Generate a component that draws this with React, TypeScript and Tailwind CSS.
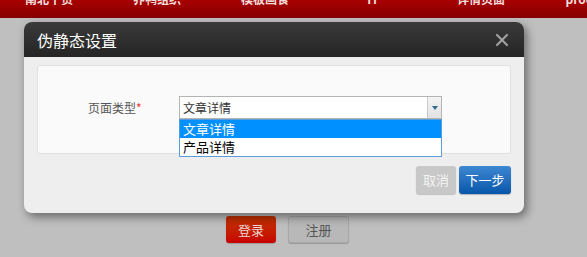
import { X } from "lucide-react";

const navItems = ["南北干货", "养鸭组织", "模板画食", "IT", "详情页面", "product"];

export default function App() {
  return (
    <div
      className="relative w-[587px] h-[257px] overflow-hidden bg-[#bfbfbf]"
      style={{ fontFamily: '"Noto Sans CJK SC", "Liberation Sans", sans-serif' }}
    >
      {/* top nav, mostly scrolled off */}
      <div className="h-[18px] overflow-hidden bg-gradient-to-b from-[#a80000] to-[#860000]">
        <div className="flex -mt-[9px] -ml-[5px]">
          {navItems.map((t) => (
            <span key={t} className="w-[108px] shrink-0 text-center text-[12px] font-bold leading-[16px] text-[#f2dcdc]">
              {t}
            </span>
          ))}
        </div>
      </div>

      {/* page buttons behind the overlay */}
      <div className="flex gap-[12px] mt-[198px] ml-[226px]">
        <button className="w-[50px] h-[27px] rounded-[3px] bg-gradient-to-b from-[#c03000] to-[#c80000] text-[13px] text-[#f0d8d8] shadow-[0_1px_1px_rgba(0,0,0,0.2)]">
          登录
        </button>
        <button className="w-[61px] h-[27px] rounded-[3px] border border-[#a8a8a8] bg-[#b8b8b8] text-[13px] text-[#555] shadow-[0_1px_1px_rgba(0,0,0,0.2)]">
          注册
        </button>
      </div>

      {/* dialog */}
      <div className="absolute left-[24px] top-[22px] w-[500px] h-[191px] rounded-[8px] bg-[#eeeeee] shadow-[3px_4px_10px_rgba(0,0,0,0.45)]">
        <div className="flex items-center justify-between h-[35px] pl-[13px] pr-[12px] rounded-t-[8px] bg-gradient-to-b from-[#3a3a3a] to-[#252525]">
          <span className="text-[16px] text-white leading-none">伪静态设置</span>
          <X size={20} strokeWidth={2.6} className="text-[#a0a0a0]" />
        </div>

        <div className="mx-[13px] mt-[8px] h-[89px] rounded-[3px] border border-[#e0e0e0] bg-[#fafafa]">
          <div className="flex items-center mt-[30px] ml-[50px]">
            <span className="w-[91px] text-[12px] text-[#555]">
              页面类型<span className="text-[#e33]">*</span>
            </span>
            <div className="relative">
              <div className="flex w-[263px] h-[23px] border border-[#b4b4b4] bg-white">
                <span className="flex-1 pl-[3px] text-[12px] leading-[21px] text-[#333]">文章详情</span>
                <div className="flex items-center justify-center w-[14px] border-l border-[#c8c8c8] bg-gradient-to-b from-[#f4f4f4] to-[#e2e2e2]">
                  <span className="w-0 h-0 border-l-[3px] border-r-[3px] border-t-[4px] border-l-transparent border-r-transparent border-t-[#2f6a98]" />
                </div>
              </div>
              <div className="absolute left-0 top-[23px] w-[263px] border border-[#5a9ddc] bg-white">
                <div className="h-[18px] pl-[3px] bg-[#0090ff] text-[13px] leading-[18px] text-white">文章详情</div>
                <div className="h-[18px] pl-[3px] text-[13px] leading-[18px] text-black">产品详情</div>
              </div>
            </div>
          </div>
        </div>

        <div className="flex justify-end gap-[3px] mt-[12px] mr-[13px]">
          <button className="w-[40px] h-[28px] rounded-[3px] bg-[#c8c8c8] text-[13px] text-[#f4f4f4] shadow-[0_1px_1px_rgba(0,0,0,0.2)]">
            取消
          </button>
          <button className="w-[52px] h-[28px] rounded-[3px] bg-gradient-to-b from-[#3d88d2] to-[#0456aa] text-[13px] text-white shadow-[0_1px_1px_rgba(0,0,0,0.25)]">
            下一步
          </button>
        </div>
      </div>
    </div>
  );
}
